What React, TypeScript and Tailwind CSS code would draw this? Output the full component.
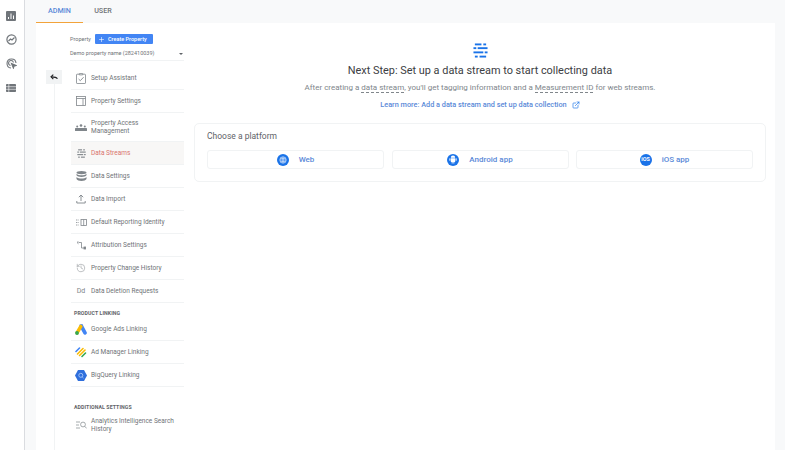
import type { ReactNode } from 'react';
import { ExternalLink, History, Plus } from 'lucide-react';

const Row = ({ icon, label, active, tall, last }: { icon: ReactNode; label: string; active?: boolean; tall?: boolean; last?: boolean }) => (
  <div className={`flex items-center border-b ${last ? 'border-transparent' : 'border-[#f1f3f4]'} ${tall ? 'h-[29px]' : 'h-[23px]'} ${active ? 'bg-[#f8f7f6]' : ''}`}>
    <div className="w-[20px] flex justify-center items-center text-[#80868b] shrink-0">{icon}</div>
    <span className={`text-[6.5px] leading-[8px] w-[90px] whitespace-pre-line ${active ? 'text-[#d9736d]' : 'text-[#6f7377]'}`}>{label}</span>
  </div>
);

const RailChart = () => (
  <svg width="10" height="10" viewBox="0 0 10 10">
    <rect width="10" height="10" rx="1" fill="#70757a" />
    <path d="M2.5 8V6M5 8V2.5M7.5 8V4.5" stroke="#fff" strokeWidth="1" />
  </svg>
);

const RailGauge = () => (
  <svg width="11" height="11" viewBox="0 0 11 11" fill="none" stroke="#70757a" strokeWidth="1.2">
    <circle cx="5.5" cy="5.5" r="4.6" />
    <path d="M2.5 7l2-2 1.5 1 2.5-2.5" />
  </svg>
);

const RailTarget = () => (
  <svg width="11" height="11" viewBox="0 0 11 11" fill="none" stroke="#70757a" strokeWidth="1.1">
    <path d="M5 10a4.5 4.5 0 1 1 5-5" />
    <path d="M4.5 7.5a2.5 2.5 0 1 1 3-3" />
    <path d="M5.5 5.5l4.5 2-2 .6-.6 2z" fill="#70757a" />
  </svg>
);

const RailList = () => (
  <svg width="10" height="8" viewBox="0 0 10 8">
    <rect width="10" height="8" rx="0.8" fill="#70757a" />
    <path d="M0 2.7h10M0 5.3h10M2.8 0v8" stroke="#fff" strokeWidth="0.6" />
  </svg>
);

const StreamIcon = ({ w, h, color }: { w: number; h: number; color: string }) => (
  <svg width={w} height={h} viewBox="0 0 16 16" fill={color}>
    <rect x="2" y="0.5" width="7" height="2" />
    <rect x="11" y="0.5" width="3" height="2" />
    <rect x="0.5" y="4.5" width="3" height="2" />
    <rect x="5" y="4.5" width="10.5" height="2" />
    <rect x="0.5" y="9" width="10.5" height="2" />
    <rect x="12.5" y="9" width="3" height="2" />
    <rect x="2" y="13.5" width="3" height="2" />
    <rect x="7" y="13.5" width="7" height="2" />
  </svg>
);

const SetupIcon = () => (
  <svg width="10" height="11" viewBox="0 0 10 11" fill="none" stroke="#80868b" strokeWidth="0.8">
    <rect x="0.5" y="1.2" width="9" height="9.300" rx="0.6" />
    <path d="M3.300 0.600h3.400v1.300H3.300z" fill="#fff" />
    <path d="M2.600 6l1.700 1.700L7.600 4.200" strokeWidth="0.900" />
  </svg>
);

const SettingsIcon = () => (
  <svg width="10" height="10" viewBox="0 0 10 10" fill="none" stroke="#80868b" strokeWidth="0.800">
    <rect x="0.500" y="0.500" width="9" height="9" />
    <path d="M0.500 2.500h9M7 2.500v7" />
  </svg>
);

const DataStack = () => (
  <svg width="11" height="10" viewBox="0 0 11 10" fill="#80868b">
    <ellipse cx="5.5" cy="1.6" rx="5" ry="1.6" />
    <path d="M.5 2.7c1 1.2 3 1.6 5 1.6s4-.4 5-1.6v1.6c-.6 1.1-2.6 1.7-5 1.7s-4.400-.6-5-1.700z" />
    <path d="M.5 6c1 1.100 3 1.500 5 1.500s4-.4 5-1.500v2c-.6 1.200-2.600 2-5 2s-4.400-.8-5-2z" />
  </svg>
);

const ImportIcon = () => (
  <svg width="10" height="10" viewBox="0 0 10 10" fill="none" stroke="#80868b" strokeWidth="0.9">
    <path d="M5 7V1M2.800 3.200L5 1l2.200 2.200" />
    <path d="M.8 7v2h8.400V7" />
  </svg>
);

const AttributionIcon = () => (
  <svg width="10" height="9" viewBox="0 0 10 9" fill="none" stroke="#80868b" strokeWidth="0.8">
    <path d="M2.500 1.500h3v5.500h2.500" />
    <path d="M2.500.2L1 1.500l1.500 1.300" />
    <rect x="8" y="6" width="1.800" height="2" fill="#80868b" />
  </svg>
);

const BackIcon = () => (
  <svg width="8" height="6" viewBox="0 0 9 7" fill="none" stroke="#202124" strokeWidth="1.300">
    <path d="M8.500 5.500C7.500 3.600 6 3.300 1.500 3.300" />
    <path d="M3.700.7L1 3.300l2.700 2.600" />
  </svg>
);

const GoogleAds = () => (
  <svg width="12" height="11" viewBox="0 0 12 11">
    <path d="M4.600 0.600L7.400 0l4.200 8a1.800 1.800 0 0 1-3.200 1.800L4.400 2.400z" fill="#4285f4" />
    <path d="M4.500 1.200a1.800 1.800 0 0 1 3 1.800L3.400 10A1.800 1.800 0 0 1 .4 8.200z" fill="#fbbc04" />
    <circle cx="2" cy="9" r="1.900" fill="#34a853" />
  </svg>
);

const AdManager = () => (
  <svg width="12" height="12" viewBox="0 0 12 12" fill="none" strokeWidth="1.600" strokeLinecap="round">
    <path d="M1 5.500l3.500-3.500" stroke="#4285f4" />
    <path d="M2.500 8L8 2.500" stroke="#fbbc04" />
    <path d="M4.500 9.500L10 4" stroke="#fbbc04" />
    <path d="M7 10.500l3.500-3.500" stroke="#34a853" />
  </svg>
);

const BigQuery = () => (
  <svg width="12" height="11" viewBox="0 0 12 11">
    <path d="M3 0h6l3 5.500L9 11H3L0 5.500z" fill="#2f6fdc" />
    <circle cx="5.800" cy="5.300" r="2" fill="none" stroke="#a8c7fa" strokeWidth="0.900" />
    <path d="M7.200 6.800l1.300 1.300" stroke="#a8c7fa" strokeWidth="0.900" />
  </svg>
);

const SearchHistory = () => (
  <svg width="11" height="8" viewBox="0 0 11 8" fill="none" stroke="#80868b" strokeWidth="0.700">
    <path d="M0 1h4M0 4h3M0 7h4" />
    <circle cx="7" cy="3.500" r="2.400" />
    <path d="M8.800 5.300L10.600 7.400" />
  </svg>
);

const AndroidGlyph = () => (
  <svg width="8" height="9" viewBox="0 0 8 9" fill="#fff">
    <path d="M1.800 2.800a2.200 2.200 0 0 1 4.400 0z" />
    <path d="M1.800 3.200h4.400v3.300a.5.500 0 0 1-.5.5H2.300a.5.500 0 0 1-.5-.5z" />
    <rect x="0.400" y="3.200" width="1" height="2.600" rx="0.500" />
    <rect x="6.600" y="3.200" width="1" height="2.600" rx="0.500" />
    <rect x="2.700" y="7" width="0.900" height="1.500" />
    <rect x="4.400" y="7" width="0.900" height="1.500" />
  </svg>
);

const PlatformButton = ({ icon, label }: { icon: ReactNode; label: string }) => (
  <div className="flex-1 h-[19px] border border-[#f1f3f4] rounded-[3px] flex items-center justify-center gap-[10px] bg-white">
    <div className="w-[12px] h-[12px] rounded-full bg-[#1a73e8] flex items-center justify-center text-white">{icon}</div>
    <span className="text-[8px] font-medium text-[#5a89d8]">{label}</span>
  </div>
);

export default function App() {
  return (
    <div className="flex w-[785px] h-[450px] overflow-hidden bg-[#f8f9fa] font-['Roboto',sans-serif]">
      <aside className="w-[25px] shrink-0 bg-white border-r border-[#dadce0] flex flex-col items-center pt-[10px] pr-[2px] gap-[13px]">
        <div className="h-[11px] flex items-center"><RailChart /></div>
        <div className="h-[11px] flex items-center"><RailGauge /></div>
        <div className="h-[11px] flex items-center"><RailTarget /></div>
        <div className="h-[11px] flex items-center"><RailList /></div>
      </aside>

      <div className="flex-1 flex flex-col min-w-0">
        <div className="h-[23px] shrink-0 pl-[11px] flex text-[7.2px] font-medium">
          <div className="w-[47px] h-full flex items-center justify-center text-[#5a89d8] border-b border-[#f2a33a]">ADMIN</div>
          <div className="w-[40px] h-full flex items-center justify-center text-[#6f7377]">USER</div>
        </div>

        <div className="flex-1 ml-[11px] mr-[10px] bg-white flex min-h-0">
          <div className="w-[35px] shrink-0 flex flex-col items-center pt-[47px] pl-[1px]">
            <div className="w-[16px] h-[14px] bg-[#f1f3f4] flex items-center justify-center"><BackIcon /></div>
            <div className="flex-1 w-px bg-[#f1f3f4]" />
          </div>

          <div className="w-[113px] shrink-0 flex flex-col">
            <div className="flex items-center h-[14px] mt-[9px]">
              <span className="text-[5.5px] text-[#6f7377] w-[25px] ml-[-1px]">Property</span>
              <div className="h-[10px] w-[58px] bg-[#4285f4] rounded-[1px] flex items-center text-white text-[5.5px] font-medium pl-[3px] gap-[3px]">
                <Plus size={7} strokeWidth={2} />
                Create Property
              </div>
            </div>
            <div className="h-[13px] mt-[2px] ml-[-1px] flex items-center justify-between text-[5.5px] text-[#6f7377] border-b border-[#f1f3f4] pb-[1px]">
              <span>Demo property name (282410039)</span>
              <span className="w-0 h-0 border-l-[2px] border-r-[2px] border-t-[2px] border-l-transparent border-r-transparent border-t-[#5f6368] mr-[1px]" />
            </div>

            <div className="mt-[6px]">
              <Row label="Setup Assistant" icon={<SetupIcon />} />
              <Row label="Property Settings" icon={<SettingsIcon />} />
              <Row tall label={'Property Access\nManagement'} icon={<svg width="12" height="7" viewBox="0 0 12 7" fill="#80868b"><circle cx="6" cy="1.500" r="1.300" /><circle cx="2.200" cy="2.500" r="1" /><circle cx="9.800" cy="2.500" r="1" /><rect x="0" y="4" width="12" height="3" rx="0.600" /></svg>} />
              <Row active label="Data Streams" icon={<StreamIcon w={9} h={9} color="#80868b" />} />
              <Row label="Data Settings" icon={<DataStack />} />
              <Row label="Data Import" icon={<ImportIcon />} />
              <Row label="Default Reporting Identity" icon={<svg width="11" height="7" viewBox="0 0 11 7" fill="none" stroke="#80868b" strokeWidth="0.800"><path d="M0 1h3M0 3.500h3M0 6h3" strokeDasharray="1 0.600" /><rect x="5" y="0.500" width="5.500" height="6" /><path d="M7.700 0.500v6" /></svg>} />
              <Row label="Attribution Settings" icon={<AttributionIcon />} />
              <Row label="Property Change History" icon={<History size={10} strokeWidth={1.2} />} />
              <Row label="Data Deletion Requests" icon={<span className="text-[7px] text-[#80868b] leading-none">Dd</span>} />
            </div>

            <div className="text-[5.2px] font-bold text-[#5f6368] tracking-[0.1px] mt-[7px] h-[8px] leading-[7px] ml-[3px]">PRODUCT LINKING</div>
            <div>
              <Row label="Google Ads Linking" icon={<GoogleAds />} />
              <Row label="Ad Manager Linking" icon={<AdManager />} />
              <Row label="BigQuery Linking" icon={<BigQuery />} />
            </div>

            <div className="text-[5.2px] font-bold text-[#5f6368] tracking-[0.1px] mt-[17px] h-[7px] leading-[7px] ml-[3px]">ADDITIONAL SETTINGS</div>
            <Row tall last label="Analytics Intelligence Search History" icon={<SearchHistory />} />
          </div>

          <div className="flex-1 min-w-0 flex flex-col items-center pl-[10px] pr-[9px]">
            <div className="mt-[20px]"><StreamIcon w={15} h={15} color="#1a73e8" /></div>
            <h1 className="mt-[6px] text-[10.9px] leading-[14px] text-[#3c4043]">Next Step: Set up a data stream to start collecting data</h1>
            <p className="mt-[4px] text-[8px] leading-[11px] text-[#80868b]">
              After creating a <span className="border-b border-dashed border-[#80868b]">data stream</span>, you'll get tagging information and a <span className="border-b border-dashed border-[#80868b]">Measurement ID</span> for web streams.
            </p>
            <div className="mt-[7px] flex items-center gap-[4px] text-[7.3px] font-medium text-[#5a89d8] leading-[10px]">
              Learn more: Add a data stream and set up data collection
              <ExternalLink size={8} strokeWidth={2} className="ml-[1px] text-[#1a73e8]" />
            </div>

            <div className="mt-[13px] w-full h-[59px] border border-[#f1f3f4] rounded-[5px] px-[12px]">
              <div className="text-[8.5px] text-[#5f6368] leading-[11px] mt-[7px]">Choose a platform</div>
              <div className="flex gap-[7.5px] mt-[8px]">
                <PlatformButton label="Web" icon={<svg width="8" height="8" viewBox="0 0 8 8" fill="none" stroke="#fff" strokeWidth="0.6"><circle cx="4" cy="4" r="3.2" /><path d="M1 4h6M4 1v6M1.6 2.4h4.800M1.600 5.600h4.800" /></svg>} />
                <PlatformButton label="Android app" icon={<AndroidGlyph />} />
                <PlatformButton label="iOS app" icon={<span className="text-[5.5px] font-bold leading-none">iOS</span>} />
              </div>
            </div>
          </div>
        </div>
      </div>
    </div>
  );
}
